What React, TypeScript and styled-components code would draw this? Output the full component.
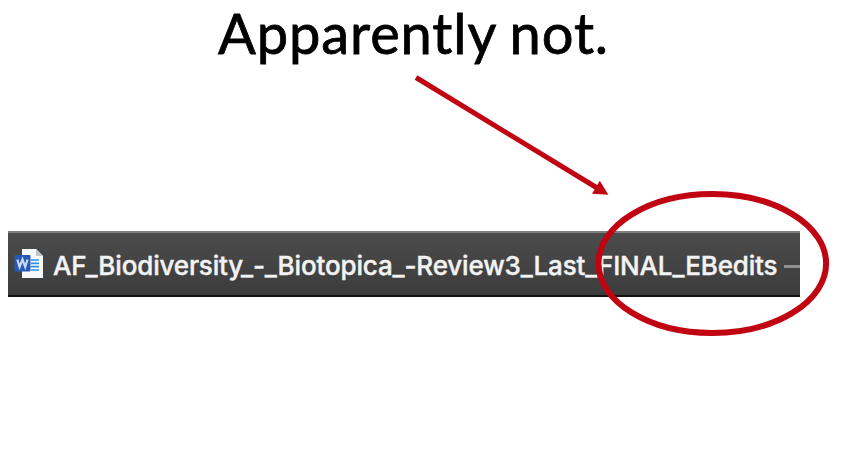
import React from "react";
import styled, { createGlobalStyle } from "styled-components";

const GlobalStyle = createGlobalStyle`
  html, body { margin: 0; background: #fff; overflow: hidden; }
  * { box-sizing: border-box; }
`;

const Slide = styled.main`
  position: relative;
  width: 857px;
  height: 457px;
  display: flex;
  flex-direction: column;
  align-items: flex-start;
  background: #fff;
`;

const Title = styled.h1`
  margin: 0 0 0 218px;
  height: 231px;
  font: 400 56px/65px Lato, "Open Sans", sans-serif;
  color: #000;
  -webkit-text-stroke: 0.8px #000;
  white-space: nowrap;
  letter-spacing: 0.9px;
  word-spacing: -1.5px;
`;

const TitleBar = styled.div`
  margin-left: 8px;
  width: 792px;
  height: 66px;
  display: flex;
  align-items: center;
  padding-left: 6px;
  overflow: hidden;
  border-top: 2px solid #7d7f7e;
  border-bottom: 2px solid #151213;
  background: linear-gradient(#4b4b4b, #3c3c3c);
`;

const FileIcon = styled.svg`
  flex: none;
  width: 30px;
  height: 32px;
`;

const FileName = styled.span`
  flex: none;
  margin: 3px 0 0 9px;
  font: 500 26px/34px Inter, sans-serif;
  font-feature-settings: "calt" 0;
  letter-spacing: -0.15px;
  -webkit-text-stroke: 0.4px #f3f3f3;
  color: #f3f3f3;
  white-space: nowrap;
`;

const Dash = styled.span`
  flex: none;
  width: 16px;
  height: 3px;
  margin: 4px 0 0 auto;
  background: #909090;
`;

const Annotations = styled.svg`
  position: absolute;
  inset: 0;
  pointer-events: none;
`;

export default function App() {
  return (
    <Slide>
      <GlobalStyle />
      <Title>Apparently not.</Title>
      <TitleBar>
        <FileIcon viewBox="0 0 30 32" aria-hidden="true">
          <path d="M8 1H22L29 8V30H8Z" fill="#f7f8f9" />
          <path d="M22 1V8H29Z" fill="#c3c6c9" />
          <path d="M17 12H25M17 15.4H25M17 18.7H25M17 22H25" stroke="#2f8fe8" strokeWidth="1.7" />
          <rect x="0.5" y="7" width="16" height="16.5" rx="1" fill="#2459b8" />
          <path d="M3.3 11.5L5.6 19L8.5 11.5L11.2 19L13.5 11.5" fill="none" stroke="#c9d9f1" strokeWidth="2.2" />
        </FileIcon>
        <FileName>AF_Biodiversity_-_Biotopica_-Review3_Last_FINAL_EBedits</FileName>
        <Dash />
      </TitleBar>
      <Annotations width="857" height="457" viewBox="0 0 857 457" aria-hidden="true">
        <path d="M416 77.5L598 188.5" stroke="#c00411" strokeWidth="5" />
        <path d="M608.4 194.8L592 193.7L599.8 180.8Z" fill="#c00411" />
        <ellipse cx="712.3" cy="263.5" rx="113.8" ry="69.5" fill="none" stroke="#c00411" strokeWidth="6" />
      </Annotations>
    </Slide>
  );
}
